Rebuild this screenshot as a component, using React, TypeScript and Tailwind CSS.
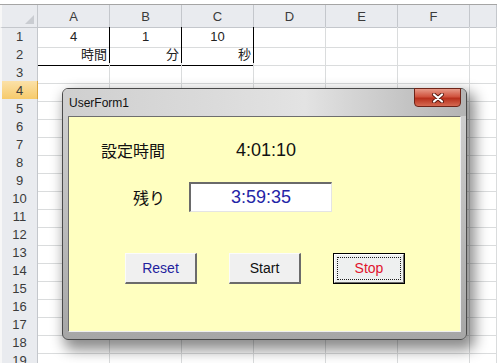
import type { ReactNode } from 'react'

const cols = ['A', 'B', 'C', 'D', 'E', 'F', '']

const cellFont = { fontFamily: '"Liberation Sans", "Noto Sans CJK JP", sans-serif' }
const jpFont = { fontFamily: '"Noto Sans CJK JP", "Liberation Sans", sans-serif' }

type CellDef = { text?: string; align?: 'center' | 'right'; boxed?: boolean; bottom?: boolean }

const data: Record<number, CellDef[]> = {
  1: [
    { text: '4', align: 'center', boxed: true },
    { text: '1', align: 'center', boxed: true },
    { text: '10', align: 'center', boxed: true },
  ],
  2: [
    { text: '時間', align: 'right', boxed: true, bottom: true },
    { text: '分', align: 'right', boxed: true, bottom: true },
    { text: '秒', align: 'right', boxed: true, bottom: true },
  ],
}

function Sheet() {
  const rows = Array.from({ length: 19 }, (_, i) => i + 1)
  return (
    <div className="flex flex-col text-[13px] text-[#222]" style={cellFont}>
      <div className="h-[4px] bg-white" />
      {/* column header */}
      <div className="grid h-[23px] grid-cols-[38px_repeat(6,72px)_1fr] border-t border-[#a5a5a5] bg-[#e9ebef]">
        <div className="relative border-r border-b border-[#c4c7cc] border-l-2 border-l-[#f7f7f7]">
          <svg className="absolute right-[3px] bottom-[3px]" width="9" height="9" viewBox="0 0 9 9">
            <path d="M9 0 L9 9 L0 9 Z" fill="#c9ccd1" />
          </svg>
        </div>
        {cols.map((c, i) => (
          <div
            key={i}
            className="flex items-center justify-center border-r border-b border-[#c4c7cc] pt-[2px] text-[#3b3b3b]"
          >
            {c}
          </div>
        ))}
      </div>
      {rows.map((r) => (
        <div key={r} className="grid h-[18px] grid-cols-[38px_repeat(6,72px)_1fr]">
          <div
            className={
              r === 4
                ? 'flex items-center justify-center border-r border-b border-[#d9a43e] border-l-2 border-l-[#f7f7f7] bg-[linear-gradient(#fbe1a8,#f6c864)] text-[#3b3b3b]'
                : 'flex items-center justify-center border-r border-b border-[#c4c7cc] border-l-2 border-l-[#f7f7f7] bg-[#e9ebef] text-[#3b3b3b]'
            }
          >
            {r}
          </div>
          {cols.map((c, ci) => {
            const d = data[r]?.[ci]
            return (
              <div
                key={ci}
                className={[
                  'flex items-center overflow-hidden px-[2px] leading-none',
                  d?.boxed ? 'border-r border-r-black' : 'border-r border-r-[#dadcdd]',
                  d?.bottom ? 'border-b border-b-black' : 'border-b border-b-[#dadcdd]',
                  d?.align === 'center' ? 'justify-center' : 'justify-end',
                ].join(' ')}
              >
                {d?.text}
              </div>
            )
          })}
        </div>
      ))}
    </div>
  )
}

function RaisedButton({ children, color, focused }: { children: ReactNode; color: string; focused?: boolean }) {
  if (focused) {
    return (
      <div className="h-[31px] w-[72px] border border-black bg-[#eef0f0]">
        <div className="flex h-full w-full items-center justify-center border-t border-l border-t-white border-l-white border-r border-b border-r-[#6b6b6b] border-b-[#6b6b6b] p-[2px]">
          <div
            className={`flex h-full w-full items-center justify-center border border-dotted border-[#1b1b1b] text-[14px] ${color}`}
          >
            {children}
          </div>
        </div>
      </div>
    )
  }
  return (
    <div
      className={`flex h-[31px] w-[72px] items-center justify-center border-t border-l border-t-[#fbfbfb] border-l-[#fbfbfb] border-r-2 border-b-2 border-r-[#6b6b6b] border-b-[#6b6b6b] bg-[#f0f0f0] text-[14px] ${color}`}
    >
      {children}
    </div>
  )
}

function UserForm() {
  return (
    <div className="absolute top-[88px] left-[62px] flex h-[252px] w-[405px] flex-col rounded-[6px] border border-[#4a4a4a] bg-[linear-gradient(#d2d2d2,#bdbdbd_50%,#a6a6a6)] shadow-[5px_7px_14px_3px_rgba(0,0,0,0.45)]">
      {/* title bar */}
      <div className="flex h-[27px] items-start justify-between rounded-t-[5px] bg-[linear-gradient(90deg,#cfcfcf_0%,#dadada_35%,#e3e3e3_60%,#c4c4c4_85%,#b4b4b4_100%)]">
        <span className="self-center pl-[6px] text-[12px] text-[#111]" style={cellFont}>
          UserForm1
        </span>
        <div className="-mt-px mr-[5px] flex h-[19px] w-[47px] items-center justify-center rounded-b-[4px] border border-[#6e2418] bg-[linear-gradient(#e79a88,#d0533e_45%,#b8301c_55%,#d56a52)]">
          <svg width="14" height="10" viewBox="0 0 14 10">
            <path d="M3 1.5 L11 8.5 M11 1.5 L3 8.5" stroke="#5a1a10" strokeWidth="4" strokeLinecap="round" />
            <path d="M3 1.5 L11 8.5 M11 1.5 L3 8.5" stroke="#ffffff" strokeWidth="2.2" strokeLinecap="round" />
          </svg>
        </div>
      </div>
      {/* client area */}
      <div className="mx-[5px] h-[216px] border border-[#6e6e6e] border-b-[#f0f0f0] border-r-[#f0f0f0] bg-[#ffffc0]">
        <div className="mt-[23px] flex h-[20px] items-center">
          <span className="ml-[32px] w-[135px] text-[16px] text-[#111]" style={jpFont}>
            設定時間
          </span>
          <span className="text-[18px] text-[#111]" style={cellFont}>
            4:01:10
          </span>
        </div>
        <div className="mt-[22px] flex h-[30px] items-center">
          <span className="ml-[64px] w-[56px] text-[16px] text-[#111]" style={jpFont}>
            残り
          </span>
          <div
            className="flex h-[30px] w-[143px] items-center justify-center border-t-2 border-l-2 border-t-[#6a6a6a] border-l-[#6a6a6a] border-r border-b border-r-[#e4e4e4] border-b-[#e4e4e4] bg-white text-[18px] text-[#2424a6]"
            style={cellFont}
          >
            3:59:35
          </div>
        </div>
        <div className="mt-[41px] ml-[56px] flex gap-[32px]" style={cellFont}>
          <RaisedButton color="text-[#1f1f9e]">Reset</RaisedButton>
          <RaisedButton color="text-[#111]">Start</RaisedButton>
          <RaisedButton color="text-[#e0142e]" focused>
            Stop
          </RaisedButton>
        </div>
      </div>
    </div>
  )
}

export default function App() {
  return (
    <div className="relative h-[363px] w-[497px] overflow-hidden bg-white">
      <Sheet />
      <UserForm />
    </div>
  )
}
